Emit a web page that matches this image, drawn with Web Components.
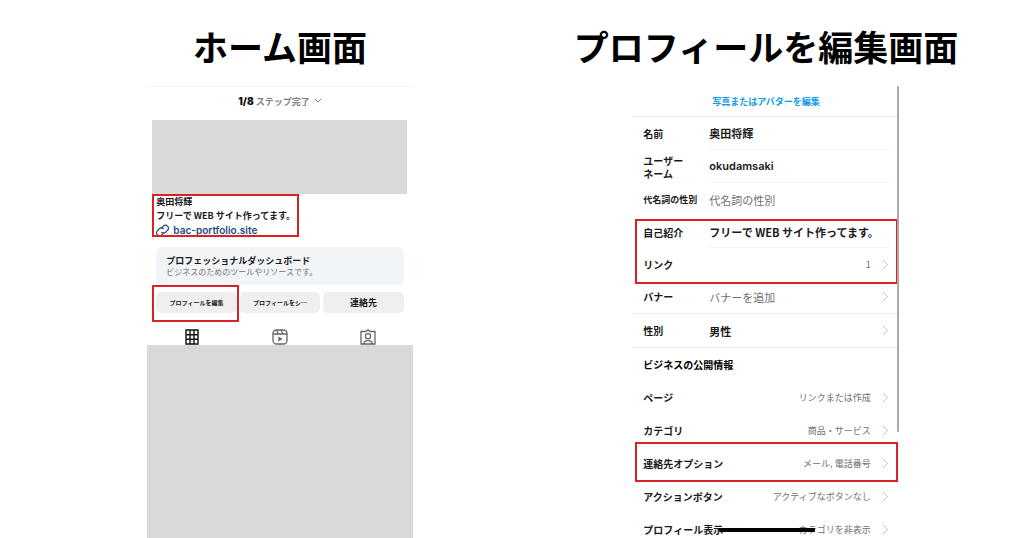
<!DOCTYPE html>
<html lang="ja">
<head>
<meta charset="utf-8">
<meta name="viewport" content="width=device-width, initial-scale=1">
<title>プロフィール</title>
<style>
	body {
		margin: 0;
		background: #fff;
		color: #1a1a1a;
		font-family: "Noto Sans CJK JP", sans-serif;
		--mark: #da2128;
		--block: #d9d9d9;
		--line: #ededed;
		--muted: #707070;
	}
</style>
</head>
<body>

<guide-page>
	<guide-panel heading="ホーム画面">
		<profile-home></profile-home>
	</guide-panel>
	<guide-panel heading="プロフィールを編集画面">
		<profile-edit></profile-edit>
	</guide-panel>
</guide-page>

<script>
class GuidePage extends HTMLElement {

	constructor() {

		super();

		this.attachShadow({ mode: 'open' });
		this.shadowRoot.innerHTML = `
			<style>
				:host {
					display: grid;
					grid-template-columns: 1fr 1fr;
					box-sizing: border-box;
					height: 100vh;
					padding: 0 15px 0 37px;
					overflow: hidden;
				}
			</style>
			<slot></slot>
		`;

	}

}

customElements.define('guide-page', GuidePage);


class GuidePanel extends HTMLElement {

	constructor() {

		super();

		this.attachShadow({ mode: 'open' });
		this.shadowRoot.innerHTML = `
			<style>
				:host {
					display: flex;
					flex-direction: column;
					align-items: center;
					min-width: 0;
					min-height: 0;
				}

				h2 {
					margin: 0;
					padding: 20px 0 14px;
					font-size: 35px;
					line-height: 52px;
					font-weight: 700;
					color: #000;
					white-space: nowrap;
				}

				div {
					display: flex;
					flex: 1;
					width: 55%;
					min-height: 0;
				}
			</style>
			<h2>${this.getAttribute('heading')}</h2>
			<div><slot></slot></div>
		`;

	}

}

customElements.define('guide-panel', GuidePanel);


/* Red frame drawn over whatever is slotted in */
class MarkFrame extends HTMLElement {

	constructor() {

		super();

		this.attachShadow({ mode: 'open' });
		this.shadowRoot.innerHTML = `
			<style>
				:host {
					display: block;
					position: relative;
				}

				:host::after {
					content: '';
					position: absolute;
					inset: var(--frame-inset, 0);
					border: 2px solid var(--mark);
					pointer-events: none;
				}
			</style>
			<slot></slot>
		`;

	}

}

customElements.define('mark-frame', MarkFrame);


class ProfileHome extends HTMLElement {

	constructor() {

		super();

		this.attachShadow({ mode: 'open' });
		this.shadowRoot.innerHTML = `
			<style>
				:host {
					display: flex;
					flex-direction: column;
					flex: 1;
					min-width: 0;
					padding: 0 1px;
				}

				button {
					display: block;
					border: 0;
					padding: 0;
					background: none;
					color: inherit;
					font: inherit;
				}

				svg {
					display: block;
					fill: none;
					stroke: currentColor;
				}

				.steps {
					display: flex;
					align-items: center;
					justify-content: center;
					gap: 2px;
					height: 28px;
					margin-bottom: 5px;
					border-top: 1px solid #f5f5f5;
					font-size: 9px;
					font-weight: 700;
					color: #808080;
				}

				.steps b {
					font-family: Inter, sans-serif;
					font-size: 10px;
					color: #111;
				}

				.steps svg {
					margin-left: 2px;
				}

				.cover {
					height: 74px;
					margin: 0 6px 0 5px;
					background: var(--block);
				}

				.bio {
					width: fit-content;
					box-sizing: border-box;
					height: 43px;
					margin-left: 5px;
					padding: 1px 4px 0;
					overflow: hidden;
					font-size: 9px;
					line-height: 14px;
					font-weight: 700;
				}

				.bio p {
					margin: 0;
				}

				.bio a {
					display: flex;
					align-items: center;
					gap: 4px;
					height: 15px;
					color: #1c4a7d;
					font: 600 10px/15px Inter, sans-serif;
					text-decoration: none;
				}

				.dashboard {
					margin: 10px 9px 7px;
					box-sizing: border-box;
					height: 38px;
					padding: 8px 10px 6px;
					border-radius: 6px;
					background: #f2f5f7;
				}

				.dashboard h3 {
					margin: 0;
					font-size: 9px;
					line-height: 12px;
					font-weight: 700;
				}

				.dashboard p {
					margin: 0;
					font-size: 8px;
					line-height: 10px;
					color: var(--muted);
				}

				.actions {
					display: grid;
					grid-template-columns: repeat(3, 1fr);
					gap: 3px;
					margin: 0 9px;
					--frame-inset: -7px -2px -9px -4px;
				}

				.actions button {
					width: 100%;
					height: 21px;
					border-radius: 5px;
					background: #efefef;
					font-size: 6px;
					line-height: 21px;
					font-weight: 700;
				}

				.actions .contact {
					font-size: 9px;
				}

				.tabs {
					display: grid;
					grid-template-columns: repeat(3, 1fr);
					padding-top: 16px;
					color: #666;
				}

				.tabs button {
					display: flex;
					justify-content: center;
				}

				.tabs .active {
					color: #111;
				}

				.posts {
					flex: 1;
					background: var(--block);
				}
			</style>

			<div class="steps">
				<b>1/8</b><span>ステップ完了</span>
				<svg width="8" height="6" viewBox="0 0 8 6"><path d="M1 1l3 3 3-3"/></svg>
			</div>
			<div class="cover"></div>

			<mark-frame class="bio">
				<p>奥田将輝</p>
				<p>フリーで WEB サイト作ってます。</p>
				<a href="#">
					<svg width="13" height="13" viewBox="0 0 13 13" stroke-width="1.2" stroke-linecap="round"><path d="M5.600 4.200l1.800-2a2.900 2.900 0 0 1 4.200 4L9.800 8.200a2.900 2.900 0 0 1-4.100.2"/><path d="M7.400 8.800l-1.800 2a2.900 2.900 0 0 1-4.200-4l1.800-2a2.900 2.900 0 0 1 4.100-.2"/></svg>
					<span>bac-portfolio.site</span>
				</a>
			</mark-frame>

			<section class="dashboard">
				<h3>プロフェッショナルダッシュボード</h3>
				<p>ビジネスのためのツールやリソースです。</p>
			</section>

			<div class="actions">
				<mark-frame><button type="button">プロフィールを編集</button></mark-frame>
				<button type="button">プロフィールをシ…</button>
				<button type="button" class="contact">連絡先</button>
			</div>

			<div class="tabs">
				<button type="button" class="active" aria-label="投稿">
					<svg width="16" height="16" viewBox="0 0 16 16" stroke-width="1.4"><path d="M2 1h12v14H2zM6 1v14M10 1v14M2 5.700h12M2 10.300h12"/></svg>
				</button>
				<button type="button" aria-label="リール">
					<svg width="16" height="16" viewBox="0 0 16 16" stroke-width="1.3"><rect x="1" y="1" width="14" height="14" rx="3.500"/><path d="M1 5h14M4.500 1.200L6.500 5M9 1l2 4"/><path d="M6.300 7.500v5L10.700 10z" fill="currentColor" stroke="none"/></svg>
				</button>
				<button type="button" aria-label="タグ付け">
					<svg width="16" height="16" viewBox="0 0 16 16" stroke-width="1.3"><path d="M1 2.500h5L8 .8l2 1.700h5v12.500H1z"/><circle cx="8" cy="7.300" r="2.600"/><path d="M3.800 15c0-2.600 1.500-3.300 4.200-3.300s4.200.7 4.200 3.300"/></svg>
				</button>
			</div>
			<div class="posts"></div>
		`;

	}

}

customElements.define('profile-home', ProfileHome);


/* Editable row: label on the left, text box on the right */
class FieldRow extends HTMLElement {

	constructor() {

		super();

		this.attachShadow({ mode: 'open' });
		this.shadowRoot.innerHTML = `
			<style>
				:host {
					display: grid;
					grid-template-columns: 66px 1fr;
					align-items: center;
					height: var(--row, 33px);
					padding-left: 11px;
					font-size: 10px;
					font-weight: 700;
				}

				label {
					line-height: 13px;
					white-space: nowrap;
				}

				:host([small]) label {
					font-size: 9px;
				}

				input {
					box-sizing: border-box;
					width: calc(100% - 10px);
					height: 100%;
					padding: 0;
					border: 0;
					border-bottom: 1px solid #f5f5f5;
					border-radius: 0;
					outline: 0;
					background: none;
					color: inherit;
					font: inherit;
					font-size: 11px;
				}

				:host([latin]) input {
					font-family: Inter, sans-serif;
					font-weight: 600;
				}

				:host([last]) input {
					border-bottom: 0;
				}

				input::placeholder {
					color: var(--muted);
					font-weight: 400;
					opacity: 1;
				}
			</style>
			<label for="field"><slot></slot></label>
			<input id="field" type="text" value="${this.getAttribute('value') || ''}" placeholder="${this.getAttribute('hint') || ''}">
		`;

	}

}

customElements.define('field-row', FieldRow);


/* Row that opens another screen */
class LinkRow extends HTMLElement {

	constructor() {

		super();

		this.attachShadow({ mode: 'open' });
		this.shadowRoot.innerHTML = `
			<style>
				:host {
					display: block;
					height: var(--row, 33px);
				}

				:host([divider]) {
					border-bottom: 1px solid var(--line);
				}

				a {
					display: flex;
					align-items: center;
					height: 100%;
					padding: 0 11px;
					color: inherit;
					font-size: 10px;
					font-weight: 700;
					text-decoration: none;
					white-space: nowrap;
				}

				.label {
					min-width: 66px;
				}

				.value {
					flex: 1;
					font-size: 9px;
					font-weight: 400;
					text-align: right;
					color: var(--muted);
				}

				:host([start]) .value {
					font-size: 11px;
					text-align: left;
				}

				:host([strong]) .value {
					font-weight: 700;
					color: inherit;
				}

				svg {
					margin-left: 10px;
					fill: none;
					stroke: #c4c4c4;
				}
			</style>
			<a href="#">
				<span class="label"><slot></slot></span>
				<span class="value"><slot name="value"></slot></span>
				<svg width="8" height="11" viewBox="0 0 8 11"><path d="M2 1l4.500 4.500L2 10"/></svg>
			</a>
		`;

	}

}

customElements.define('link-row', LinkRow);


class ProfileEdit extends HTMLElement {

	constructor() {

		super();

		this.attachShadow({ mode: 'open' });
		this.shadowRoot.innerHTML = `
			<style>
				:host {
					display: block;
					position: relative;
					flex: 1;
					min-width: 0;
					overflow: hidden;
				}

				.photo {
					display: block;
					padding-top: 2px;
					border-bottom: 1px solid var(--line);
					font-size: 9px;
					line-height: 28px;
					font-weight: 700;
					text-align: center;
					text-decoration: none;
					color: #109be8;
				}

				h3 {
					margin: 0;
					padding-left: 11px;
					color: #000;
					font-size: 10px;
					line-height: 33px;
					font-weight: 700;
				}

				.about {
					--frame-inset: 3px 2px -4px 3px;
				}

				.about field-row,
				.about link-row {
					--row: 32px;
				}

				.options {
					--frame-inset: -5px 2px -2px 3px;
				}

				.last {
					position: relative;
				}

				.strike {
					position: absolute;
					top: 15px;
					left: 87px;
					width: 96px;
					height: 4px;
					border-radius: 1px;
					background: #000;
				}

				.thumb {
					position: absolute;
					top: 0;
					right: 1px;
					bottom: 106px;
					width: 2px;
					border-radius: 1px;
					background: #aaa;
				}
			</style>

			<a class="photo" href="#">写真またはアバターを編集</a>
			<field-row value="奥田将輝">名前</field-row>
			<field-row value="okudamsaki" latin>ユーザー<br>ネーム</field-row>
			<field-row hint="代名詞の性別" small last>代名詞の性別</field-row>
			<mark-frame class="about">
				<field-row value="フリーで WEB サイト作ってます。">自己紹介</field-row>
				<link-row>リンク<span slot="value">1</span></link-row>
			</mark-frame>
			<link-row start divider>バナー<span slot="value">バナーを追加</span></link-row>
			<link-row start strong divider>性別<span slot="value">男性</span></link-row>

			<h3>ビジネスの公開情報</h3>
			<link-row>ページ<span slot="value">リンクまたは作成</span></link-row>
			<link-row>カテゴリ<span slot="value">商品・サービス</span></link-row>
			<mark-frame class="options">
				<link-row>連絡先オプション<span slot="value">メール, 電話番号</span></link-row>
			</mark-frame>
			<link-row>アクションボタン<span slot="value">アクティブなボタンなし</span></link-row>
			<div class="last">
				<link-row>プロフィール表示<span slot="value">カテゴリを非表示</span></link-row>
				<div class="strike"></div>
			</div>
			<div class="thumb"></div>
		`;

	}

}

customElements.define('profile-edit', ProfileEdit);
</script>
</body>
</html>
